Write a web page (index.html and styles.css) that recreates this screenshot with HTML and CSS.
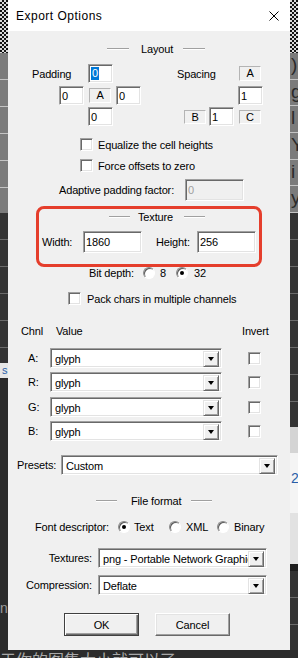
FILE: index.html
```html
<!DOCTYPE html>
<html lang="en">
<head>
  <meta charset="UTF-8">
  <title>Export Options</title>
  <link rel="stylesheet" href="styles.css">
</head>
<body>
  <div class="desk">
    <!-- 背後のアプリの一部（左端） -->
    <div class="strip">
      <div class="seg seg-checker"></div>
      <div class="seg seg-grey"></div>
      <div class="seg seg-dark seg-dark-a"></div>
      <div class="seg seg-pale seg-pale-s"><span>s</span></div>
      <div class="seg seg-deep seg-ns"><span>ns</span></div>
    </div>

    <div class="dialog">
      <div class="titlebar">
        <span class="title">Export Options</span>
        <svg class="close" width="10" height="10" viewBox="0 0 10 10">
          <path d="M0.5 0.5 L9.5 9.5 M9.5 0.5 L0.5 9.5" stroke="#000" stroke-width="1" fill="none"/>
        </svg>
      </div>

      <div class="dlg-body">
        <div class="group-head head-layout">
          <span class="etch"></span><span class="head-text">Layout</span><span class="etch"></span>
        </div>

        <div class="row pad-row1">
          <span class="lbl lbl-padding">Padding</span>
          <span class="edit edit-sm"><span class="sel">0</span></span>
          <span class="lbl lbl-spacing">Spacing</span>
          <span class="tag">A</span>
        </div>
        <div class="row pad-row2">
          <span class="edit edit-sm pad-left">0</span>
          <span class="tag tag-mid">A</span>
          <span class="edit edit-sm pad-right">0</span>
          <span class="edit edit-sm spc-one">1</span>
        </div>
        <div class="row pad-row3">
          <span class="edit edit-sm pad-bottom">0</span>
          <span class="tag tag-low tag-b">B</span>
          <span class="edit edit-sm spc-two">1</span>
          <span class="tag tag-low tag-c">C</span>
        </div>

        <div class="row check-row equalize">
          <span class="check"></span><span class="check-text">Equalize the cell heights</span>
        </div>
        <div class="row check-row force">
          <span class="check"></span><span class="check-text">Force offsets to zero</span>
        </div>

        <div class="row adaptive">
          <span class="lbl lbl-adaptive">Adaptive padding factor:</span>
          <span class="edit edit-wide edit-off">0</span>
        </div>

        <div class="tex-frame">
          <div class="group-head head-texture">
            <span class="etch"></span><span class="head-text">Texture</span><span class="etch"></span>
          </div>
          <div class="row size-row">
            <span class="lbl lbl-width">Width:</span>
            <span class="edit edit-wide">1860</span>
            <span class="lbl lbl-height">Height:</span>
            <span class="edit edit-wide">256</span>
          </div>
        </div>

        <div class="row depth-row">
          <span class="lbl lbl-depth">Bit depth:</span>
          <span class="radio"></span><span class="opt opt-8">8</span>
          <span class="radio on"></span><span class="opt opt-32">32</span>
        </div>

        <div class="row pack-row">
          <span class="check"></span><span class="check-text pack-text">Pack chars in multiple channels</span>
        </div>

        <div class="row chan-head">
          <span class="col-chnl">Chnl</span>
          <span class="col-value">Value</span>
          <span>Invert</span>
        </div>

        <div class="row chan-row chan-a">
          <span class="chan-lbl">A:</span>
          <div class="combo combo-chan"><span class="combo-text">glyph</span><span class="combo-btn"><i></i></span></div>
          <span class="check chan-check"></span>
        </div>
        <div class="row chan-row chan-r">
          <span class="chan-lbl">R:</span>
          <div class="combo combo-chan"><span class="combo-text">glyph</span><span class="combo-btn"><i></i></span></div>
          <span class="check chan-check"></span>
        </div>
        <div class="row chan-row chan-g">
          <span class="chan-lbl">G:</span>
          <div class="combo combo-chan"><span class="combo-text">glyph</span><span class="combo-btn"><i></i></span></div>
          <span class="check chan-check"></span>
        </div>
        <div class="row chan-row chan-b">
          <span class="chan-lbl">B:</span>
          <div class="combo combo-chan"><span class="combo-text">glyph</span><span class="combo-btn"><i></i></span></div>
          <span class="check chan-check"></span>
        </div>

        <div class="row presets-row">
          <span class="lbl lbl-presets">Presets:</span>
          <div class="combo combo-presets"><span class="combo-text">Custom</span><span class="combo-btn"><i></i></span></div>
        </div>

        <div class="group-head head-format">
          <span class="etch"></span><span class="head-text">File format</span><span class="etch"></span>
        </div>

        <div class="row desc-row">
          <span class="lbl lbl-desc">Font descriptor:</span>
          <span class="radio on"></span><span class="opt opt-text">Text</span>
          <span class="radio"></span><span class="opt opt-xml">XML</span>
          <span class="radio"></span><span class="opt opt-bin">Binary</span>
        </div>

        <div class="row file-row textures-row">
          <span class="lbl lbl-right">Textures:</span>
          <div class="combo combo-file"><span class="combo-text">png - Portable Network Graphics</span><span class="combo-btn"><i></i></span></div>
        </div>
        <div class="row file-row compress-row">
          <span class="lbl lbl-right">Compression:</span>
          <div class="combo combo-file"><span class="combo-text">Deflate</span><span class="combo-btn"><i></i></span></div>
        </div>

        <div class="row button-row">
          <span class="btn btn-default">OK</span>
          <span class="btn btn-cancel">Cancel</span>
        </div>
      </div>
    </div>

    <!-- 背後のアプリの一部（右端） -->
    <div class="strip">
      <div class="seg seg-checker"></div>
      <div class="seg seg-cells">
        <span class="cell">)</span>
        <span class="cell">g</span>
        <span class="cell">l</span>
        <span class="cell">Y</span>
        <span class="cell">i</span>
        <span class="cell">y</span>
      </div>
      <div class="seg seg-dark seg-dark-r"></div>
      <div class="seg seg-pale seg-pale-1"></div>
      <div class="seg seg-white seg-two"><span>2</span></div>
      <div class="seg seg-pale seg-pale-3"></div>
      <div class="seg seg-band"></div>
      <div class="seg seg-dark seg-rest"></div>
    </div>
  </div>

  <div class="below">于你的图集大小就可以了</div>
</body>
</html>
```

FILE: styles.css
```css
* {
  box-sizing: border-box;
}
html, body {
  margin: 0;
  padding: 0;
}
body {
  width: 298px;
  height: 658px;
  overflow: hidden;
  background: #2b2b2b;
  font-family: "Liberation Sans", Arial, sans-serif;
  font-size: 11px;
  letter-spacing: -0.15px;
  color: #000;
}

/* 全体：左の帯・ダイアログ・右の帯 */
.desk {
  display: flex;
  height: 650px;
}
.strip {
  width: 8px;
  display: flex;
  flex-direction: column;
  overflow: hidden;
  white-space: nowrap;
}
.seg {
  flex: none;
  overflow: hidden;
}
.seg-checker {
  height: 53px;
  background: repeating-conic-gradient(#111 0 25%, #d8d8d8 0 50%) 0 0 / 4px 4px;
}
.seg-grey {
  height: 160px;
  background: repeating-linear-gradient(to bottom, #7b7b7b 0 26px, #c4c4c4 26px 27px);
}
.seg-dark {
  background: repeating-linear-gradient(to bottom, #333 0 26px, #6a6a6a 26px 27px);
}
.seg-dark-a {
  height: 150px;
}
.seg-pale {
  background: #dcdcdc;
}
.seg-pale-s {
  height: 15px;
  padding: 1px 0 0 2px;
  font-size: 11px;
  color: #2a5ea8;
  background: #e6e6e6;
}
.seg-deep {
  flex: 1;
  background: #2b2b2b;
}
.seg-ns {
  padding-top: 222px;
  font-size: 14px;
  color: #9a9a9a;
}
.seg-cells {
  height: 160px;
  display: flex;
  flex-direction: column;
  background: #7b7b7b;
}
.cell {
  height: 27px;
  border-bottom: 1px solid #c4c4c4;
  padding-left: 1px;
  font-size: 19px;
  line-height: 24px;
  color: #2a2a2a;
}
.seg-dark-r {
  height: 214px;
}
.seg-pale-1 {
  height: 26px;
  background: #d4d4d4;
}
.seg-white {
  background: #f4f4f4;
}
.seg-two {
  height: 60px;
  padding: 17px 0 0 1px;
  font-size: 14px;
  color: #2a5ea8;
}
.seg-pale-3 {
  height: 51px;
  background: #e2e2e2;
}
.seg-band {
  height: 7px;
  background: #1d1d1d;
}
.seg-rest {
  flex: 1;
}

/* ダイアログ */
.dialog {
  width: 282px;
  display: flex;
  flex-direction: column;
  background: #f0f0f0;
}
.titlebar {
  height: 31px;
  flex: none;
  display: flex;
  align-items: center;
  padding-left: 8px;
  background: #fff;
}
.title {
  font-size: 12px;
  letter-spacing: 0.5px;
  color: #000;
}
.close {
  margin-left: auto;
  margin-right: 11px;
}

.row {
  display: flex;
  align-items: center;
  flex: none;
}
.lbl {
  flex: none;
  white-space: nowrap;
}

/* 見出し（両側に彫り線） */
.group-head {
  display: flex;
  align-items: center;
  height: 12px;
}
.etch {
  width: 22px;
  height: 2px;
  border-top: 1px solid #a0a0a0;
  border-bottom: 1px solid #fff;
}
.head-layout {
  margin-top: 12px;
  padding-left: 99px;
}
.head-layout .head-text {
  margin: 0 10px 0 12px;
}
.head-texture {
  padding-left: 70px;
}
.head-texture .etch {
  width: 21px;
}
.head-texture .head-text {
  margin: 0 11px 0 8px;
}
.head-format {
  margin-top: 20px;
  padding-left: 88px;
}
.head-format .etch {
  width: 21px;
}
.head-format .head-text {
  margin: 0 10px 0 14px;
}

/* くぼんだ枠（入力欄・チェックボックス） */
.edit, .check, .combo {
  border: 1px solid;
  border-color: #a0a0a0 #fff #fff #a0a0a0;
  box-shadow: inset 1px 1px #696969, inset -1px -1px #e3e3e3;
  background: #fff;
}
.edit {
  flex: none;
  display: flex;
  align-items: center;
  padding-left: 2px;
}
.edit-sm {
  width: 25px;
  height: 19px;
}
.edit-wide {
  width: 59px;
  height: 22px;
}
.edit-off {
  background: #f0f0f0;
  color: #a0a0a0;
}
.sel {
  background: #0078d7;
  color: #fff;
  padding: 0 1px;
  line-height: 13px;
}
.tag {
  flex: none;
  width: 22px;
  height: 15px;
  border: 1px solid;
  border-color: #b4b4b4 #fff #fff #b4b4b4;
  text-align: center;
  line-height: 13px;
}
.tag-low {
  height: 14px;
  line-height: 12px;
}

/* Padding / Spacing */
.pad-row1 {
  margin-top: 9px;
  height: 19px;
}
.lbl-padding {
  margin-left: 24px;
  width: 56px;
}
.lbl-spacing {
  margin-left: 64px;
  width: 62px;
}
.pad-row2 {
  margin-top: 3px;
  height: 19px;
}
.pad-left {
  margin-left: 51px;
}
.tag-mid {
  margin-left: 5px;
}
.pad-right {
  margin-left: 5px;
}
.spc-one {
  margin-left: 97px;
}
.pad-row3 {
  margin-top: 2px;
  height: 19px;
}
.pad-bottom {
  margin-left: 80px;
}
.tag-b {
  margin-left: 71px;
}
.spc-two {
  margin-left: 3px;
}
.tag-c {
  margin-left: 5px;
}

/* チェックボックス */
.check {
  flex: none;
  width: 13px;
  height: 13px;
}
.check-row {
  height: 13px;
  padding-left: 72px;
}
.check-text {
  margin-left: 5px;
  white-space: nowrap;
}
.equalize {
  margin-top: 12px;
}
.force {
  margin-top: 8px;
}

.adaptive {
  margin-top: 7px;
  height: 22px;
}
.lbl-adaptive {
  margin-left: 51px;
  width: 126px;
}

/* 赤枠で囲まれた Texture */
.tex-frame {
  flex: none;
  margin: 5px 0 0 28px;
  width: 226px;
  height: 61px;
  border: 3px solid #e53e2c;
  border-radius: 8px;
  padding-top: 2px;
}
.size-row {
  margin-top: 8px;
  height: 22px;
}
.lbl-width {
  margin-left: 3px;
  width: 41px;
}
.lbl-height {
  margin-left: 14px;
  width: 41px;
}

/* ラジオボタン */
.radio {
  flex: none;
  position: relative;
  width: 12px;
  height: 12px;
  border-radius: 50%;
  border: 1px solid;
  border-color: #8a8a8a #fff #fff #8a8a8a;
  box-shadow: inset 1px 1px #5a5a5a;
  background: #fff;
}
.radio.on::after {
  content: "";
  position: absolute;
  left: 3px;
  top: 3px;
  width: 4px;
  height: 4px;
  border-radius: 50%;
  background: #000;
}
.opt {
  flex: none;
  white-space: nowrap;
}
.depth-row {
  height: 12px;
}
.lbl-depth {
  margin-left: 81px;
  width: 54px;
}
.opt-8 {
  margin-left: 5px;
  width: 16px;
}
.opt-32 {
  margin-left: 6px;
}

.pack-row {
  margin-top: 13px;
  height: 13px;
  padding-left: 60px;
}
.pack-text {
  margin-left: 6px;
}

/* チャンネル */
.chan-head {
  margin-top: 20px;
  height: 12px;
}
.col-chnl {
  margin-left: 13px;
  width: 35px;
}
.col-value {
  width: 186px;
}
.chan-row {
  height: 20px;
}
.chan-a {
  margin-top: 11px;
}
.chan-r {
  margin-top: 4px;
}
.chan-g {
  margin-top: 5px;
}
.chan-b {
  margin-top: 4px;
}
.chan-lbl {
  margin-left: 20px;
  width: 22px;
}
.chan-check {
  margin-left: 26px;
}

/* コンボボックス */
.combo {
  flex: none;
  display: flex;
  height: 20px;
  padding: 2px;
}
.combo-text {
  flex: 1;
  overflow: hidden;
  white-space: nowrap;
  padding-left: 2px;
  line-height: 16px;
}
.combo-btn {
  flex: none;
  width: 16px;
  height: 16px;
  display: flex;
  align-items: center;
  justify-content: center;
  background: #f0f0f0;
  border: 1px solid;
  border-color: #e3e3e3 #696969 #696969 #e3e3e3;
  box-shadow: inset 1px 1px #fff, inset -1px -1px #a0a0a0;
}
.combo-btn i {
  width: 0;
  height: 0;
  border-left: 3.5px solid transparent;
  border-right: 3.5px solid transparent;
  border-top: 4px solid #000;
}
.combo-chan {
  width: 172px;
}
.presets-row {
  margin-top: 14px;
  height: 20px;
}
.lbl-presets {
  margin-left: 9px;
  width: 44px;
}
.combo-presets {
  width: 217px;
}

.desc-row {
  margin-top: 14px;
  height: 12px;
}
.lbl-desc {
  margin-left: 27px;
  width: 83px;
}
.opt-text {
  margin-left: 4px;
  width: 35px;
}
.opt-xml {
  margin-left: 5px;
  width: 31px;
}
.opt-bin {
  margin-left: 5px;
}

.file-row {
  height: 20px;
}
.textures-row {
  margin-top: 15px;
}
.compress-row {
  margin-top: 7px;
}
.lbl-right {
  width: 84px;
  text-align: right;
}
.combo-file {
  margin-left: 6px;
  width: 169px;
}

/* OK / Cancel */
.button-row {
  margin-top: 18px;
  height: 23px;
}
.btn {
  flex: none;
  width: 75px;
  height: 23px;
  display: flex;
  align-items: center;
  justify-content: center;
  background: #f0f0f0;
  border: 1px solid;
  border-color: #fff #696969 #696969 #fff;
  box-shadow: inset -1px -1px #a0a0a0, inset 1px 1px #e3e3e3;
}
.btn-default {
  margin-left: 56px;
  border-color: #404040;
  box-shadow: inset 1px 1px #fff, inset -1px -1px #696969, inset -2px -2px #a0a0a0;
}
.btn-cancel {
  margin-left: 16px;
}

/* ダイアログの下に見える本文 */
.below {
  height: 8px;
  overflow: hidden;
  white-space: nowrap;
  padding-top: 1px;
  font-family: "Noto Sans CJK SC", "Liberation Sans", sans-serif;
  font-size: 16px;
  line-height: 16px;
  letter-spacing: 0;
  color: #a8a8a8;
}
```
